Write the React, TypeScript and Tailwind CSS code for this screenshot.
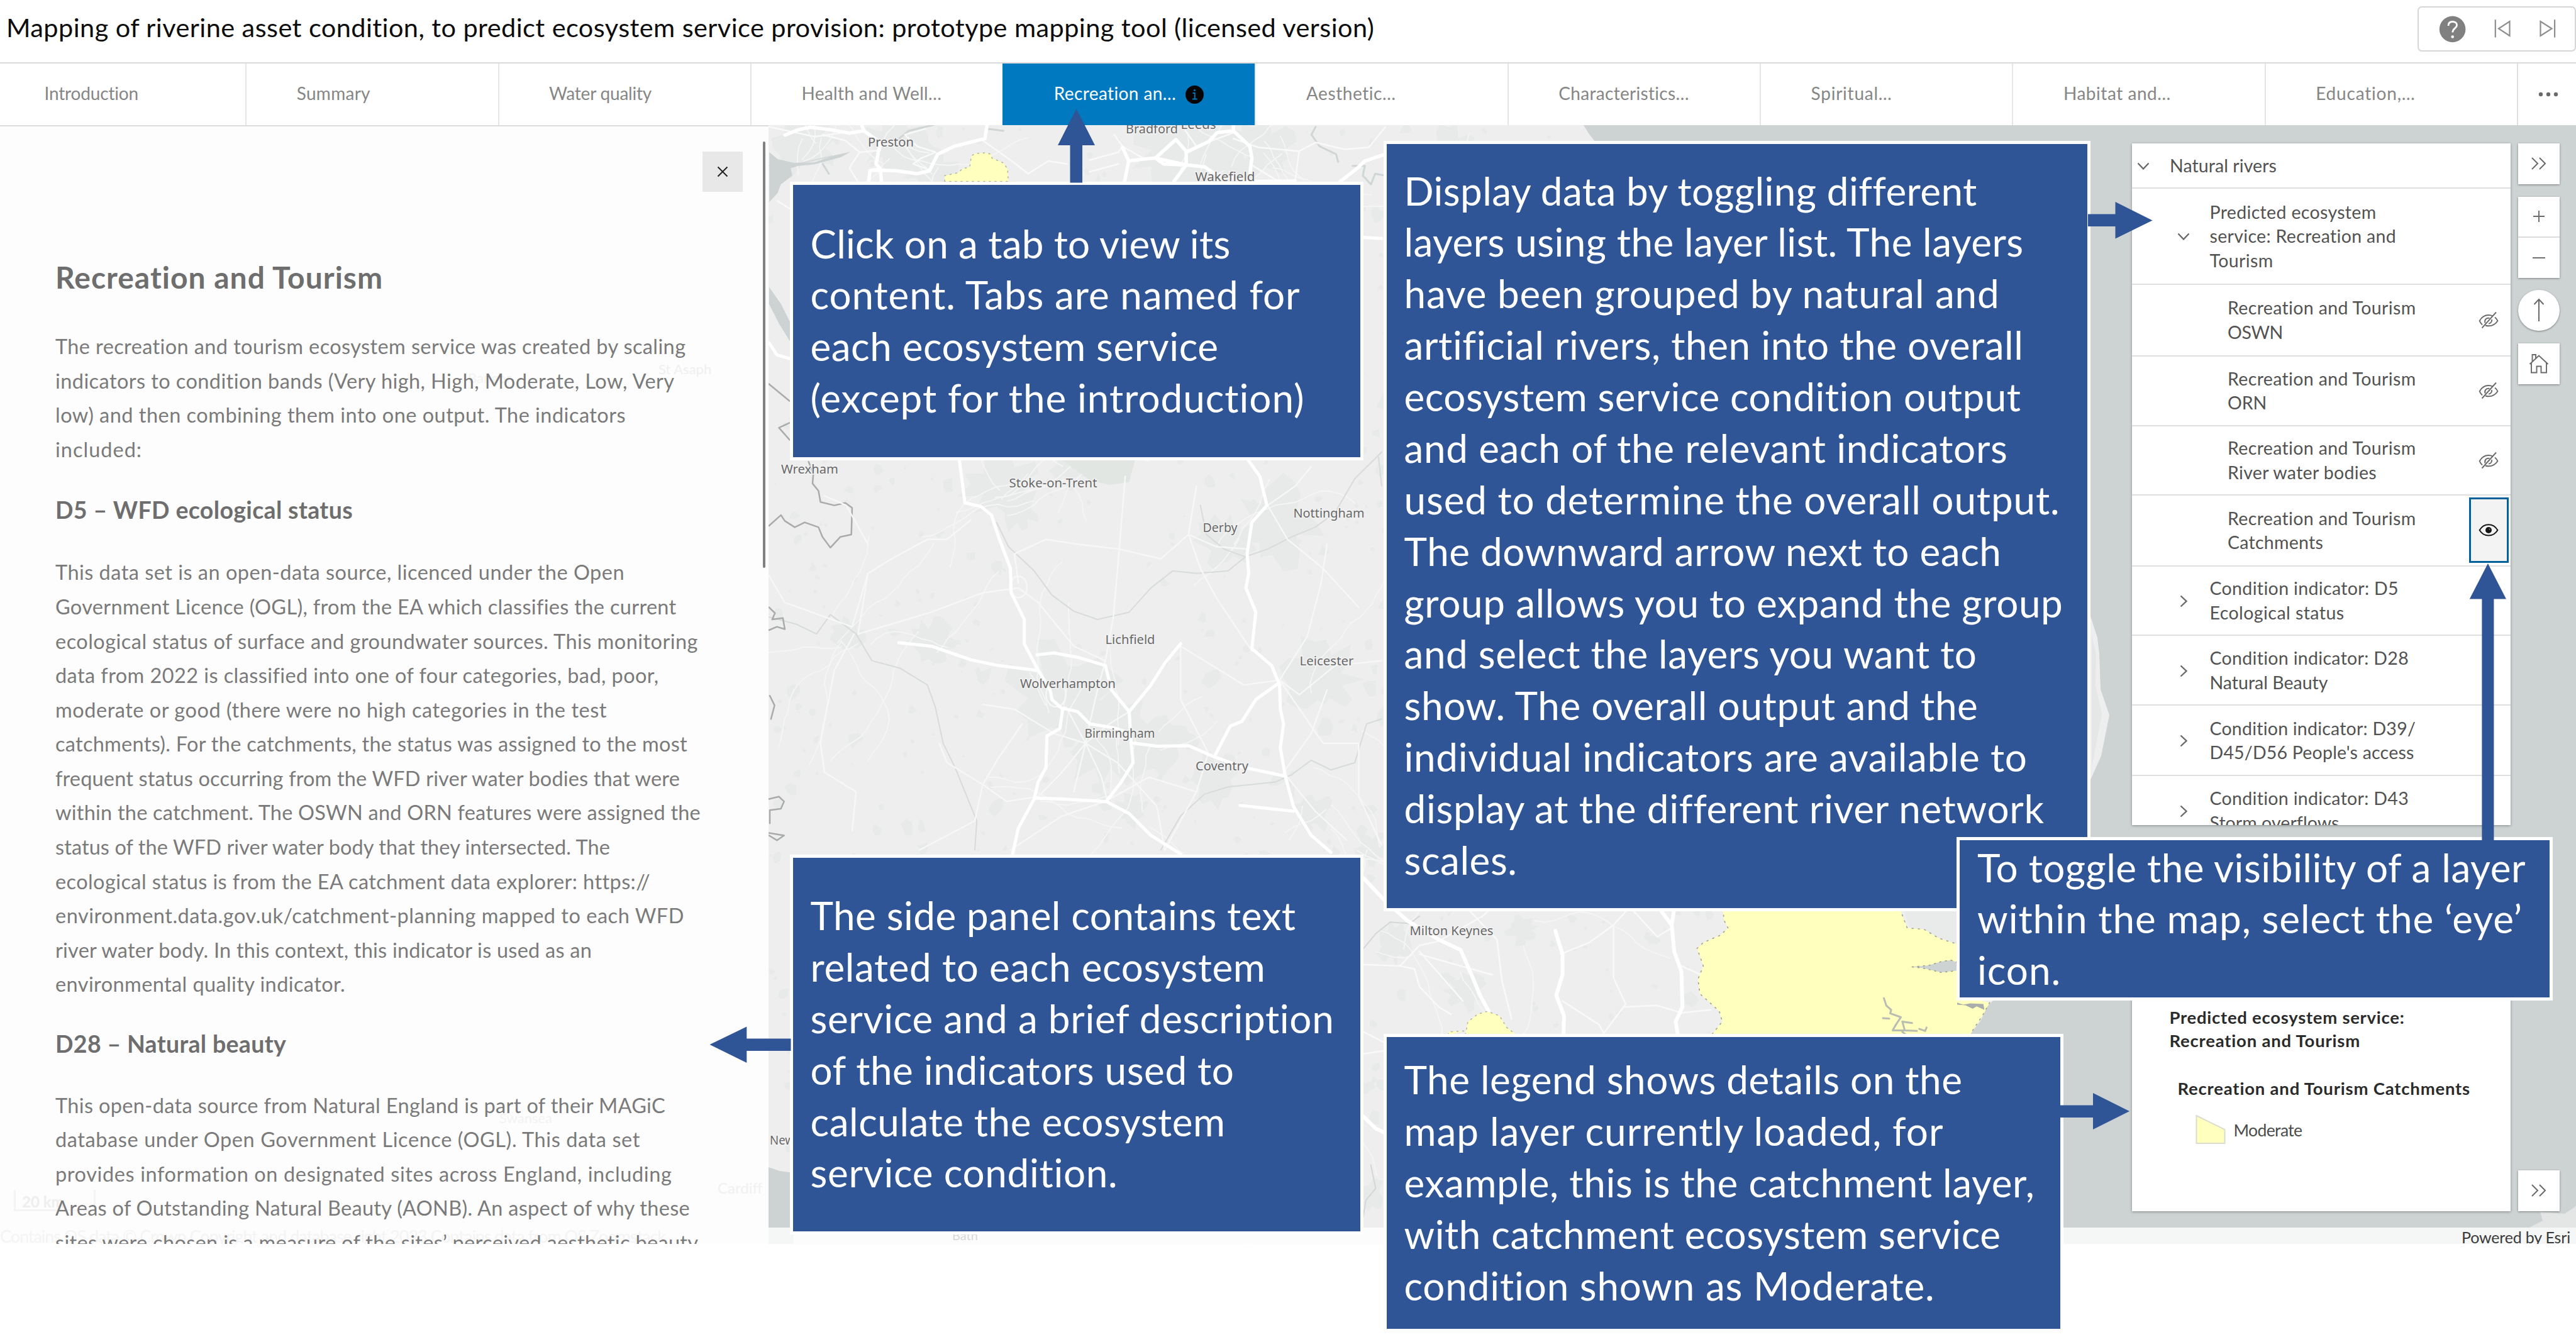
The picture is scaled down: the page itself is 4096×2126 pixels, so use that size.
import { useLayoutEffect, useRef, useState } from "react";
import type { ReactNode } from "react";

/* A single line of text whose tracking is adjusted to fill a given width. */
function Line({ w, children, className = "" }: { w: number; children: string; className?: string }) {
  const ref = useRef<HTMLSpanElement>(null);
  const [spacing, setSpacing] = useState(0);
  useLayoutEffect(() => {
    const natural = ref.current?.getBoundingClientRect().width ?? w;
    setSpacing((w - natural) / Math.max(1, children.length));
  }, []);
  return (
    <span className={`block whitespace-nowrap ${className}`}>
      <span ref={ref} style={{ letterSpacing: `${spacing}px` }}>
        {children}
      </span>
    </span>
  );
}

type L = [string, number];
const lines = (items: L[]) => items.map(([t, w], i) => <Line key={i} w={w}>{t}</Line>);

const tabs: { label: string; w: number; active?: boolean }[] = [
  { label: "Introduction", w: 150 },
  { label: "Summary", w: 117 },
  { label: "Water quality", w: 163 },
  { label: "Health and Well…", w: 223 },
  { label: "Recreation an…", w: 195, active: true },
  { label: "Aesthetic…", w: 143 },
  { label: "Characteristics…", w: 208 },
  { label: "Spiritual…", w: 129 },
  { label: "Habitat and…", w: 171 },
  { label: "Education,…", w: 159 },
];

const intro: L[] = [
  ["The recreation and tourism ecosystem service was created by scaling", 1003],
  ["indicators to condition bands (Very high, High, Moderate, Low, Very", 985],
  ["low) and then combining them into one output. The indicators", 907],
  ["included:", 138],
];
const d5: L[] = [
  ["This data set is an open-data source, licenced under the Open", 905],
  ["Government Licence (OGL), from the EA which classifies the current", 987],
  ["ecological status of surface and groundwater sources. This monitoring", 1022],
  ["data from 2022 is classified into one of four categories, bad, poor,", 959],
  ["moderate or good (there were no high categories in the test", 877],
  ["catchments). For the catchments, the status was assigned to the most", 1005],
  ["frequent status occurring from the WFD river water bodies that were", 993],
  ["within the catchment. The OSWN and ORN features were assigned the", 1026],
  ["status of the WFD river water body that they intersected. The", 882],
  ["ecological status is from the EA catchment data explorer: https://", 945],
  ["environment.data.gov.uk/catchment-planning mapped to each WFD", 1000],
  ["river water body. In this context, this indicator is used as an", 853],
  ["environmental quality indicator.", 461],
];
const d28: L[] = [
  ["This open-data source from Natural England is part of their MAGiC", 970],
  ["database under Open Government Licence (OGL). This data set", 930],
  ["provides information on designated sites across England, including", 981],
  ["Areas of Outstanding Natural Beauty (AONB). An aspect of why these", 1009],
  ["sites were chosen is a measure of the sites’ perceived aesthetic beauty", 1023],
];

function Chevron({ dir }: { dir: "down" | "right" }) {
  return (
    <svg width="20" height="20" viewBox="0 0 20 20" fill="none" stroke="#6a6a6a" strokeWidth="2.4" className={dir === "right" ? "-rotate-90" : ""}>
      <path d="M1.5 5.5 10 14.5 18.5 5.5" />
    </svg>
  );
}
function EyeOn() {
  return (
    <svg width="32" height="22" viewBox="0 0 32 22" fill="none" stroke="#151515" strokeWidth="2">
      <path d="M1.6 11C5 5.200 10 2.200 16 2.200S27 5.200 30.400 11C27 16.600 22 19.600 16 19.600S5 16.600 1.600 11Z" />
      <circle cx="16" cy="11" r="5" fill="#151515" stroke="none" />
      <circle cx="17.500" cy="9.600" r="1" fill="#888" stroke="none" />
    </svg>
  );
}
function EyeOff() {
  return (
    <svg width="32" height="28" viewBox="0 0 32 28" fill="none" stroke="#6a6a6a" strokeWidth="1.900">
      <path d="M6 21.500C4 19.800 2.600 17.500 1.600 15.200 5 9 10 6 16 6c2.600 0 4.600.5 6.500 1.500" />
      <path d="M26 9.500c2 1.500 3.400 3.400 4.400 5.700C27 20.500 22 23.300 16 23.300c-1.800 0-3.400-.3-5-.8" />
      <path d="M28 1.500 5.500 26.500" />
      <path d="M10.500 18.500c-1.500-5 2-8.500 7-7.600M21 13c.6 3.600-1.600 6.200-5 6.600" />
    </svg>
  );
}

function Row({ h, indent, chevron, eye, children }: { h: string; indent: string; chevron?: "down" | "right"; eye?: "on" | "off"; children: ReactNode }) {
  return (
    <div className={`flex shrink-0 items-center border-b-2 border-[#dfdfdf] ${h}`}>
      <div className={`flex shrink-0 items-center pt-[2px] ${indent}`}>{chevron && <Chevron dir={chevron} />}</div>
      <div className="text-[28.5px] leading-[38.5px] text-[#525252]">{children}</div>
      {eye === "off" && <div className="mr-[3px] ml-auto flex w-[63px] justify-center"><EyeOff /></div>}
      {eye === "on" && (
        <div className="mr-[3px] ml-auto flex h-[104px] w-[63px] items-center justify-center border-[3px] border-[#00619b] bg-[#f3f3f3]">
          <EyeOn />
        </div>
      )}
    </div>
  );
}
const ROOT_IND = "w-[60.5px] pl-[8px]";
const MID_IND = "w-[124px] pl-[72px]";
const LEAF_IND = "w-[152.5px]";

function LayerList() {
  return (
    <div className="absolute top-[29px] left-[2167.5px] flex h-[1083.500px] w-[602px] flex-col overflow-hidden bg-white shadow-[0_1px_4px_rgba(0,0,0,0.35)]">
      <Row h="h-[72px]" indent={ROOT_IND} chevron="down">{lines([["Natural rivers", 170]])}</Row>
      <Row h="h-[152.5px]" indent={MID_IND} chevron="down">
        {lines([["Predicted ecosystem", 265], ["service: Recreation and", 297], ["Tourism", 101]])}
      </Row>
      <Row h="h-[114px]" indent={LEAF_IND} eye="off">{lines([["Recreation and Tourism", 300], ["OSWN", 88]])}</Row>
      <Row h="h-[111px]" indent={LEAF_IND} eye="off">{lines([["Recreation and Tourism", 300], ["ORN", 62]])}</Row>
      <Row h="h-[110.5px]" indent={LEAF_IND} eye="off">{lines([["Recreation and Tourism", 300], ["River water bodies", 237]])}</Row>
      <Row h="h-[112.5px]" indent={LEAF_IND} eye="on">{lines([["Recreation and Tourism", 300], ["Catchments", 152]])}</Row>
      <Row h="h-[110.5px]" indent={MID_IND} chevron="right">{lines([["Condition indicator: D5", 301], ["Ecological status", 214]])}</Row>
      <Row h="h-[111px]" indent={MID_IND} chevron="right">{lines([["Condition indicator: D28", 317], ["Natural Beauty", 188]])}</Row>
      <Row h="h-[112px]" indent={MID_IND} chevron="right">{lines([["Condition indicator: D39/", 328], ["D45/D56 People's access", 325]])}</Row>
      <Row h="h-[111px]" indent={MID_IND} chevron="right">{lines([["Condition indicator: D43", 317], ["Storm overflows", 206]])}</Row>
    </div>
  );
}

function Legend() {
  return (
    <div className="absolute top-[1340px] left-[2167.5px] h-[386.500px] w-[602px] bg-white pt-[61px] pl-[60px] text-[#2b2b2b] shadow-[0_1px_4px_rgba(0,0,0,0.35)]">
      <div className="text-[27.5px] leading-[36.5px] font-bold">
        {lines([["Predicted ecosystem service:", 374], ["Recreation and Tourism", 304]])}
      </div>
      <div className="mt-[40px] pl-[13px] text-[27.5px] leading-[36.5px] font-bold">{lines([["Recreation and Tourism Catchments", 466]])}</div>
      <div className="mt-[22px] flex items-center pl-[41px]">
        <svg width="48" height="48" viewBox="0 0 48 48">
          <path d="M1.500 2 46.500 24V46H1.500Z" fill="#ffffbe" stroke="#dcdcd0" strokeWidth="2" />
        </svg>
        <div className="pt-[3px] pl-[13px] text-[26.5px] leading-[36px] text-[#4c4c4c]">{lines([["Moderate", 109]])}</div>
      </div>
    </div>
  );
}

function DoubleChevron() {
  return (
    <svg width="26" height="22" viewBox="0 0 26 22" fill="none" stroke="#6a6a6a" strokeWidth="2">
      <path d="M2 2 11 11 2 20M14 2 23 11 14 20" />
    </svg>
  );
}

function MapControls() {
  const btn = "flex w-[65.5px] items-center justify-center bg-white shadow-[0_1px_3px_rgba(0,0,0,0.4)]";
  return (
    <>
      <div className="absolute top-[29px] left-[2782px] flex flex-col">
        <div className={`h-[64.5px] ${btn}`}><DoubleChevron /></div>
        <div className="mt-[20px] bg-white shadow-[0_1px_3px_rgba(0,0,0,0.4)]">
          <div className="flex h-[65.5px] w-[65.5px] items-center justify-center border-b-2 border-[#dcdcdc]">
            <svg width="20" height="20" viewBox="0 0 20 20" stroke="#6a6a6a" strokeWidth="1.900"><path d="M10 1V19M1 10H19" /></svg>
          </div>
          <div className="flex h-[64px] w-[65.5px] items-center justify-center">
            <svg width="20" height="20" viewBox="0 0 20 20" stroke="#6a6a6a" strokeWidth="1.900"><path d="M0 10H20" /></svg>
          </div>
        </div>
        <div className={`mt-[18.500px] h-[65.5px] rounded-full ${btn}`}>
          <svg width="20" height="40" viewBox="0 0 20 40" fill="none" stroke="#6a6a6a" strokeWidth="2"><path d="M10 38V3M2.500 11 10 3 17.500 11" /></svg>
        </div>
        <div className={`mt-[19.500px] h-[65px] ${btn}`}>
          <svg width="32" height="32" viewBox="0 0 32 32" fill="none" stroke="#6a6a6a" strokeWidth="1.900">
            <path d="M1.500 17 16 3.500 30.500 17M4 15V30.500H12.500V20.500H19.500V30.500H28V15M5.500 12.500V2H11V7.500" />
          </svg>
        </div>
      </div>
      <div className={`absolute top-[1661.500px] left-[2782px] h-[65px] ${btn}`}><DoubleChevron /></div>
    </>
  );
}

/* Deterministic noise used to scatter small settlements and lanes over the base map. */
function rng(seed: number) {
  let s = seed;
  return () => {
    s = (s * 1664525 + 1013904223) % 4294967296;
    return s / 4294967296;
  };
}
const rand = rng(11);
const landBounds = (x: number, y: number) => {
  if (y < 290) return x < 2490;
  if (y > 1448) return x < 2900;
  return x < 2260;
};
const blobs: string[] = [];
for (let i = 0; i < 1100; i++) {
  const x = 1225 + rand() * 1700;
  const y = 200 + rand() * 1750;
  const r = 2 + rand() * rand() * 11;
  let d = "";
  for (let a = 0; a < 7; a++) {
    const rr = r * (0.5 + rand());
    d += `${a ? "L" : "M"}${(x + Math.cos(a * 0.9) * rr).toFixed(1)} ${(y + Math.sin(a * 0.9) * rr * 1.1).toFixed(1)}`;
  }
  if (landBounds(x, y)) blobs.push(d + "Z");
}
const towns: [number, number, number][] = [
  [1690, 1110, 85], [1760, 1180, 75], [1830, 1190, 60], [1930, 1240, 45], [2100, 1080, 65], [2030, 830, 70], [1950, 860, 45],
  [1590, 770, 60], [1620, 810, 40], [1345, 1010, 35], [1480, 1020, 38], [1930, 250, 80], [1860, 230, 60], [2010, 240, 50],
  [1420, 230, 50], [1280, 235, 50], [1480, 270, 40], [2215, 1500, 32], [2330, 1575, 32], [2420, 1480, 24], [1300, 650, 40],
  [1700, 740, 35], [2180, 1350, 30], [1800, 1290, 30], [1250, 1900, 25], [2090, 1290, 30], [2310, 240, 40], [2180, 1900, 25],
];
const townShapes = towns.map(([x, y, r]) => {
  let d = "";
  for (let a = 0; a < 22; a++) {
    const rr = r * (0.5 + rand() * 0.7);
    d += `${a ? "L" : "M"}${(x + Math.cos(a * 0.2856) * rr).toFixed(1)} ${(y + Math.sin(a * 0.2856) * rr).toFixed(1)}`;
  }
  return d + "Z";
});
const lanes: string[] = [];
for (let i = 0; i < 90; i++) {
  const t = towns[Math.floor(rand() * towns.length)];
  let x = t[0] + (rand() - 0.5) * 60;
  let y = t[1] + (rand() - 0.5) * 60;
  let a = rand() * 6.28;
  let d = `M${x.toFixed(0)} ${y.toFixed(0)}`;
  const n = 4 + Math.floor(rand() * 14);
  for (let k = 0; k < n; k++) {
    a += (rand() - 0.5) * 0.7;
    x += Math.cos(a) * 15;
    y += Math.sin(a) * 15;
    if (!landBounds(x, y)) break;
    d += `L${x.toFixed(0)} ${y.toFixed(0)}`;
  }
  lanes.push(d);
}

const places: [string, number, number, number][] = [
  ["Preston", 1380, 232.7, 73], ["Bradford", 1790, 211.6, 83], ["Leeds", 1877.6, 205.4, 56], ["Wakefield", 1900.5, 288, 95],
  ["Wrexham", 1242, 752.7, 91], ["Stoke-on-Trent", 1604.5, 775, 140], ["Derby", 1912.5, 846, 55], ["Nottingham", 2056.5, 823, 113],
  ["Lichfield", 1757.5, 1023.6, 79], ["Leicester", 2066.5, 1058.3, 86], ["Wolverhampton", 1622, 1093.8, 152],
  ["Birmingham", 1724.5, 1172.6, 112], ["Coventry", 1901, 1225, 84], ["Milton Keynes", 2241.5, 1487.2, 133], ["Newport", 1224, 1819.7, 76],
];

function BaseMap() {
  const ns = { vectorEffect: "non-scaling-stroke" as const };
  return (
    <svg className="absolute inset-0 h-full w-full" viewBox="1222 199 2874 1779" preserveAspectRatio="none">
      <rect x="1222" y="199" width="2874" height="1779" fill="#cdd2d3" />
      <path d="M1222 199H2518L2526 212 2540 230 3324 980 3335 1014 3338 1040 3340 1096 3354 1137 3341 1202 3324 1240 3100 1448 3170 1590 3160 1600 3150 1622 3129 1650 2700 1978H1222Z" fill="#eeeeee" />
      <path d="M3326 1010 3333 1040 3332 1090 3342 1135 3330 1200 3326 1220Z" fill="#e4e7e6" />
      <g fill="#e7eae9">
        {townShapes.map((d, i) => <path key={i} d={d} />)}
        {blobs.map((d, i) => <path key={i} d={d} />)}
      </g>
      <g fill="none" stroke="#f5f5f5" strokeWidth="1.800">
        {lanes.map((d, i) => <path key={i} d={d} />)}
      </g>

      {/* Midlands */}
      <g transform="translate(1210.2 186.2) scale(.62931 .7718)" fill="none" strokeLinejoin="round" strokeLinecap="round">
        <path d="M750 700 830 748 880 758 930 752 945 705Z" fill="#e2e6e2" />
        <path d="M20 350 50 385 75 425V465L45 425 20 385Z" fill="#cdd2d3" />
        <g stroke="#d8dbdb" strokeWidth="2">
          <path {...ns} d="M595 835 625 885 690 935 735 985 790 1018 850 1035 930 1020 985 970 1040 935 1100 940 1180 935 1225 905 1280 890 1340 865 1400 845 1450 815 1500 745 1568 690" />
          <path {...ns} d="M20 1030 90 1045 140 1065 175 1025 240 1065 280 1120 350 1135 420 1170 440 1215 460 1290 490 1340 520 1400 545 1450 540 1510" />
          <path {...ns} d="M1010 1510 1060 1440 1120 1395 1180 1380 1300 1370 1340 1355 1390 1325 1440 1345 1500 1330 1530 1250 1568 1240" />
          <path {...ns} d="M1110 800 1125 860 1170 890 1220 905" />
          <path {...ns} d="M1560 700 1568 760M20 100 100 95 180 80" />
        </g>
        <g stroke="#a9abab" strokeWidth="2.500">
          <path {...ns} d="M20 842 50 820 60 832 85 845 110 835 145 845 155 865 175 887 200 865 228 860 230 805 213 795 185 800 150 793 145 770 130 755 132 735 120 710" />
          <path {...ns} d="M20 1010 35 1022 28 1035 55 1032 60 1055 40 1050 20 1057M22 1192 34 1212 25 1240M20 1405 45 1400 58 1410 50 1425 22 1428V1455M20 1475 58 1480 40 1490 20 1480M20 550 72 585M72 630 45 640 72 665" />
        </g>
        <g stroke="#f7f7f7" strokeWidth="2.300">
          <path {...ns} d="M245 1065 270 940 330 910 420 870 470 870 530 830M270 940 230 1050 60 1000 20 945M270 880 215 800 160 780M235 1065 185 1140 150 1290 160 1350 240 1390 230 1470" />
          <path {...ns} d="M650 970 560 980 430 1020 245 1065M650 970 700 1000 790 1090 870 1120 890 1030 905 890 920 740M905 890 1010 910 1080 860M870 1120 850 1180 830 1250 820 1290 900 1330 1000 1420 1020 1510" />
          <path {...ns} d="M820 1290 760 1350 700 1400M820 1290 740 1270 640 1220 560 1210M820 1290 880 1250 930 1225M820 1290 860 1360 875 1410M820 1290 770 1215M820 1290 790 1390M560 1375 600 1320 660 1250M560 1375 470 1330 450 1290" />
          <path {...ns} d="M1080 860 1110 930 1150 990 1240 1100M1230 890 1150 885 1080 860 1100 760M1280 800 1350 760 1390 720M1280 800 1330 870 1420 930 1510 1010M1310 1160 1380 1070 1415 960 1430 880M1310 1160 1360 1190 1450 1130 1568 1120M1310 1160 1220 1170 1060 1090M1310 1160 1420 1290 1510 1290 1510 1400 1568 1500" />
          <path {...ns} d="M1130 1310 1100 1390 1020 1510M1130 1310 1060 1200 1060 1090M1320 1350 1400 1430 1480 1490M1320 1350 1390 1270 1430 1180" />
          <path {...ns} d="M700 1400 620 1410 560 1375M630 1510 760 1440 870 1410 980 1360 1100 1390M560 1375 540 1450 400 1510M650 960 640 900 720 870 800 880 905 890" />
          <circle {...ns} cx="650" cy="968" r="22" />
          <circle {...ns} cx="745" cy="1190" r="25" />
        </g>
        <g stroke="#ffffff" strokeWidth="5">
          <path {...ns} d="M500 700 515 795 555 802 582 820 600 865 630 930 632 980 665 1035 665 1085 697 1135 730 1180 735 1200 762 1220 755 1260 722 1275 720 1340 700 1370 690 1405 650 1465 635 1520" />
          <path {...ns} d="M348 1083 430 1090 530 1118 600 1130 697 1140M697 1108 740 1104 800 1113 870 1130 885 1180 930 1225 935 1290 940 1330 910 1370 872 1410 930 1435 985 1480 1060 1518" />
          <path {...ns} d="M762 1218 800 1225 830 1250 890 1258 935 1270M942 1290 1000 1296 1080 1295 1145 1318 1220 1340 1320 1357M930 1225 985 1170 1020 1125 1060 1085M1145 1318 1185 1255 1215 1245 1250 1200 1305 1168" />
          <path {...ns} d="M1225 700 1260 740 1278 800 1240 835 1228 900 1232 940 1225 970 1250 1020 1240 1095 1290 1130 1310 1170 1312 1220 1320 1250 1312 1300 1325 1360 1345 1420 1390 1480 1440 1515M690 1403 760 1405 870 1410M1210 1418 1345 1430M20 465 40 490 75 498M1520 248 1568 250" />
        </g>
      </g>

      {/* North */}
      <g transform="translate(1210.2 186.2) scale(.65306 .3103)" fill="none" strokeLinejoin="round" strokeLinecap="round">
        <path d="M20 180 40 215 80 235 130 232 180 195 218 178 195 205 130 242 90 250 72 262 76 300 48 345 40 390 20 435Z" fill="#cdd2d3" />
        <path {...ns} d="M1350 50 1340 90 1360 150 1400 190 1405 230M1440 250 1470 250 1465 300 1485 345 1495 290 1520 300M150 240 165 290M550 60 590 70M330 120 360 70 420 40" stroke="#d0d5d5" strokeWidth="3" />
        <path {...ns} d="M240 180 215 260 235 330M290 170 240 180 205 120 150 90M390 210 425 180 380 150 350 90 400 60M390 210 370 240 410 270M540 120 580 180 620 240 650 290 700 225 745 240M800 220 870 180 880 150 860 90M880 150 930 210M800 280 870 240M1150 110 1210 155 1310 175 1350 130 1420 165 1480 155 1520 50M1310 175 1300 330M1190 240 1260 330M1150 80 1060 150 1030 60M40 430 70 470M20 50 130 100 200 80" stroke="#f9f9f9" strokeWidth="2.500" />
        <path {...ns} d="M58 92 90 65 120 52 170 65 215 82 250 70 245 42M250 70 290 130 280 240 290 265 265 275 262 330M290 265 293 330M270 272 330 275 380 290 410 275 430 190 470 150 545 110 550 42M880 155 895 225 885 330M895 225 930 215 960 210 1010 115 1035 175 1035 245 960 210 980 240 1035 245 1080 255 1110 300 1210 330 1300 328M1035 245 1005 330M1035 180 1090 125 1110 80 1150 70 1150 42M1150 70 1190 150 1195 210 1190 290M1410 330 1450 265 1470 225 1520 190" stroke="#ffffff" strokeWidth="5.500" />
        <path {...ns} d="M447 330 447 300 480 285 490 265 508 255 512 200 520 187 545 183 560 190 562 210 590 235 600 265 602 330Z" fill="#ffffbe" stroke="#b4b49c" strokeWidth="1.500" strokeDasharray="2 7" />
      </g>

      {/* South east */}
      <g transform="translate(2141.1 1396.4) scale(.7718 .46545)" fill="none" strokeLinejoin="round" strokeLinecap="round">
        <path {...ns} d="M35 240 60 190 90 150 130 155 150 130M32 1180 40 1100 60 1060 50 980" stroke="#d3d7d7" strokeWidth="2" />
        <path {...ns} d="M35 295 110 300 150 230 190 215 280 130 300 100M110 300 140 310 150 370 190 440 215 465M150 250 240 420M250 105 310 210 320 350 340 480M440 260 500 220 550 160 580 105M550 170 550 340 575 430 530 530M570 440 640 435 690 460 750 450M445 420 520 500 530 530M670 170 640 200 590 110M690 300 730 330M35 600 75 590M35 525 76 560M300 330 150 260" stroke="#f9f9f9" strokeWidth="2.500" />
        <path {...ns} d="M35 0 75 70 125 145 190 210 235 245 260 340 275 400 293 455M430 180 445 260 445 330 432 400 448 470 447 530M645 105 670 160 675 250 690 320 692 440 678 490 682 530M675 105 670 160M35 815 60 855 76 868" stroke="#ffffff" strokeWidth="6" />
        <path d="M1258 100H1148L1158 165 1200 190 1258 225Z" fill="#e9ebea" />
        <path d="M775 105 778 145 786 170 770 195 735 220 722 240 727 262 735 300 724 345 728 395 745 420 768 455 774 490 750 540H1282L1310 470 1325 425 1258 400V225L1220 205 1190 175 1155 170 1140 105Z" fill="#ffffbe" />
        <path {...ns} d="M775 105 778 145 786 170 770 195 735 220 722 240 727 262 735 300 724 345 728 395 745 420 768 455 774 490 750 540M1140 105 1155 170 1190 175 1220 205 1258 225M1325 425 1310 470 1282 540" stroke="#a3a38c" strokeWidth="1.600" strokeDasharray="2 8" />
        <path {...ns} d="M1165 303 1200 298 1225 285 1245 280 1262 290V315L1225 322 1190 308Z" fill="#cdd2d3" stroke="#9a9c8c" strokeWidth="1.500" strokeDasharray="2 7" />
        <path {...ns} d="M1107 410 1112 435 1122 450 1120 462 1142 475 1132 500 1125 520 1150 520 1145 490 1165 495M1150 520 1175 522M1180 515 1192 522 1195 510M1105 478 1118 480M1145 525 1155 538" stroke="#b8bcb2" strokeWidth="3" />
        <path d="M1258 425 1270 432 1285 428 1312 430 1314 450 1298 438 1290 446 1275 434 1258 432Z" fill="#a9adab" />
        <path {...ns} d="M245 535 250 490 270 465 290 455 315 470 330 510 350 535ZM210 535V525L245 522" fill="#ffffbe" stroke="#b4b49c" strokeWidth="1.500" strokeDasharray="2 7" />
      </g>
      <path d="M1222 1856 1240 1862 1262 1865V1978H1222Z" fill="#cdd2d3" />
      <path d="M4096 1918 4078 1930 4039 1927 4043 1941 4022 1952H4096Z" fill="#e4e6e6" />

      <g fontFamily="'Noto Sans', sans-serif" fontSize="20" fill="#686868" stroke="#f2f2f2" strokeWidth="3" paintOrder="stroke">
        {places.map(([name, x, y, w]) => (
          <text key={name} x={x} y={y} textLength={w} lengthAdjust="spacingAndGlyphs">{name}</text>
        ))}
      </g>
    </svg>
  );
}

const BOX = "absolute border-[5px] border-white bg-[#2f5597] text-[62px] leading-[81.87px] text-white";

export default function App() {
  return (
    <div className="relative flex h-[2126px] w-[4096px] flex-col overflow-hidden bg-white font-['Lato',sans-serif]">
      <header className="flex h-[101px] shrink-0 items-start border-b-2 border-[#dadada]">
        <h1 className="pl-[10px] text-[41.5px] leading-[87px] font-normal text-[#0c0c0c]"><Line w={2176}>Mapping of riverine asset condition, to predict ecosystem service provision: prototype mapping tool (licensed version)</Line></h1>
        <div className="mt-[9.500px] ml-auto h-[72.500px] w-[252px] rounded-[7px] border-2 border-[#d6d6d6]">
          <svg width="250" height="69" viewBox="3846 11.500 250 69" fill="none">
            <circle cx="3899.600" cy="45.900" r="20.800" fill="#808080" />
            <path d="M3893 40.500C3893 36 3896 34 3899.800 34S3906.600 36 3906.600 39.500C3906.600 44.500 3899.800 44.500 3899.800 51" stroke="#fff" strokeWidth="2.800" />
            <circle cx="3899.700" cy="58" r="2.300" fill="#fff" />
            <path d="M3967.800 30.700V59M3990.500 33.500V56.500L3973 45ZM4062.100 30.700V59M4039.500 33.500V56.500L4057.500 45Z" stroke="#8e8e8e" strokeWidth="2.200" />
          </svg>
        </div>
      </header>

      <nav className="-ml-[11px] flex h-[98px] shrink-0 text-[28px] text-[#868686]">
        {tabs.map((t) => (
          <div key={t.label} className={`flex w-[401.3px] shrink-0 items-center border-l-2 pb-[4px] pl-[79.5px] ${t.active ? "border-[#0079c1] bg-[#0079c1] text-white" : "border-[#e6e6e6]"}`}>
            <Line w={t.w}>{t.label}</Line>
            {t.active && (
              <svg width="29" height="29" viewBox="0 0 29 29" className="mt-[4px] ml-[15px]">
                <circle cx="14.500" cy="14.500" r="14.500" fill="#050505" />
                <path d="M11.500 12H14.800V21M11 21.500H18.500" stroke="#0079c1" strokeWidth="1.800" fill="none" />
                <circle cx="14.500" cy="7.500" r="1.500" fill="#0079c1" />
              </svg>
            )}
          </div>
        ))}
        <div className="flex flex-1 items-center border-l-2 border-[#e0e0e0] pl-[32px]">
          <svg width="32" height="8" viewBox="0 0 32 8" fill="#6a6a6a"><circle cx="4" cy="4" r="3.200" /><circle cx="16" cy="4" r="3.200" /><circle cx="28" cy="4" r="3.200" /></svg>
        </div>
      </nav>

      <main className="flex h-[1779px] shrink-0">
        <aside className="relative w-[1222px] shrink-0 overflow-hidden border-t-2 border-[#d9dddd] bg-[#fdfdfd] pt-[210px] pl-[88px] text-[32.5px] leading-[54.6px] text-[#7a7a7a]">
          <div className="absolute top-[380px] left-[744px] text-[22px] leading-[40px] text-[#f3f3f3]">Bangor</div>
          <div className="absolute top-[366px] left-[1047px] text-[22px] leading-[40px] text-[#f0f0f0]">St Asaph</div>
          <div className="absolute top-[1557px] left-[794px] text-[22px] leading-[40px] text-[#f3f3f3]">Swansea</div>
          <div className="absolute top-[1668px] left-[1141px] text-[24px] leading-[40px] text-[#f1f1f1]">Cardiff</div>
          <div className="absolute top-[1691px] left-[22px] h-[34px] w-[130px] border-x-[3px] border-b-[3px] border-[#f4f4f4] pl-[10px] text-[24px] leading-[38px] font-bold text-[#eeeeee]">20 km</div>
          <div className="absolute top-[1745px] left-0 text-[27px] leading-[40px] text-[#f4f4f4]">
            {lines([["Contains OS data © Crown Copyright and database right 2023 Contains data from OS Zoomstack", 1058]])}
          </div>
          <div className="absolute top-[40px] left-[1117px] flex h-[64px] w-[64px] items-center justify-center bg-[#e8e8e8]">
            <svg width="18" height="18" viewBox="0 0 18 18" stroke="#222" strokeWidth="2"><path d="M1.500 1.500 16.500 16.500M16.500 1.500 1.500 16.500" /></svg>
          </div>
          <div className="absolute top-[24px] left-[1213px] h-[678px] w-[4px] rounded-full bg-[#808080]" />

          <div className="relative">
            <h2 className="text-[48px] leading-[60px] font-bold text-[#6e6e6e]"><Line w={522}>Recreation and Tourism</Line></h2>
            <div className="mt-[53px] leading-[54.7px]">{lines(intro)}</div>
            <h3 className="mt-[46px] text-[37.5px] leading-[44px] font-bold text-[#6e6e6e]"><Line w={473}>D5 – WFD ecological status</Line></h3>
            <div className="mt-[50.5px]">{lines(d5)}</div>
            <h3 className="mt-[45px] text-[37.5px] leading-[44px] font-bold text-[#6e6e6e]"><Line w={367}>D28 – Natural beauty</Line></h3>
            <div className="mt-[48.5px]">{lines(d28)}</div>
          </div>
        </aside>

        <section className="relative flex-1 overflow-hidden">
          <BaseMap />
          <LayerList />
          <Legend />
          <MapControls />
          <div className="absolute inset-x-0 bottom-0 flex h-[26px] justify-end bg-white/80 pr-[9px]">
            <div className="absolute top-[-1px] left-[292px] text-[20px] leading-[26px] text-[#d8d8d8]">Bath</div>
            <div className="text-[25px] leading-[30px] text-[#3a3a3a]">{lines([["Powered by Esri", 173]])}</div>
          </div>
        </section>
      </main>

      {/* Annotations laid over the application */}
      <div className={`${BOX} top-[288.500px] left-[1255.500px] h-[443.500px] w-[912px] pt-[53px] pl-[28px]`}>
        {lines([["Click on a tab to view its", 668], ["content. Tabs are named for", 779], ["each ecosystem service", 649], ["(except for the introduction)", 787]])}
      </div>
      <div className={`${BOX} top-[1359px] left-[1255.500px] h-[604px] w-[912px] pt-[51px] pl-[28px]`}>
        {lines([["The side panel contains text", 772], ["related to each ecosystem", 724], ["service and a brief description", 834], ["of the indicators used to", 674], ["calculate the ecosystem", 660], ["service condition.", 490]])}
      </div>
      <div className={`${BOX} top-[223.500px] left-[2199.500px] h-[1225px] w-[1124.500px] pt-[34px] pl-[28px]`}>
        {lines([
          ["Display data by toggling different", 909], ["layers using the layer list. The layers", 985], ["have been grouped by natural and", 947],
          ["artificial rivers, then into the overall", 985], ["ecosystem service condition output", 982], ["and each of the relevant indicators", 960],
          ["used to determine the overall output.", 1043], ["The downward arrow next to each", 950], ["group allows you to expand the group", 1048],
          ["and select the layers you want to", 911], ["show. The overall output and the", 913], ["individual indicators are available to", 991],
          ["display at the different river network", 1016], ["scales.", 180],
        ])}
      </div>
      <div className={`${BOX} top-[1644px] left-[2199.500px] h-[474px] w-[1081px] pt-[27px] pl-[28px]`}>
        {lines([["The legend shows details on the", 888], ["map layer currently loaded, for", 858], ["example, this is the catchment layer,", 1003], ["with catchment ecosystem service", 949], ["condition shown as Moderate.", 845]])}
      </div>
      <div className={`${BOX} top-[1331px] left-[3111px] h-[260px] w-[948px] pt-[2.500px] pl-[28px]`}>
        {lines([["To toggle the visibility of a layer", 872], ["within the map, select the ‘eye’", 867], ["icon.", 133]])}
      </div>
      <svg className="absolute inset-0 h-[2126px] w-[4096px]" viewBox="0 0 4096 2126" fill="#2f5597">
        <path d="M1711.500 173 1741 231H1721V290.500H1701.500V231H1682Z" />
        <path d="M1128.500 1661 1187.300 1632.500V1651.500H1257.500V1671H1187.300V1690Z" />
        <path d="M3320 340.500H3363.500V321L3422.500 350.500 3363.500 379.500V360H3320Z" />
        <path d="M3275 1757.500H3328V1738L3386 1767 3328 1796V1777H3275Z" />
        <path d="M3955.900 896 3985 952.500H3965.400V1337H3946.400V952.500H3926.800Z" />
      </svg>
    </div>
  );
}
